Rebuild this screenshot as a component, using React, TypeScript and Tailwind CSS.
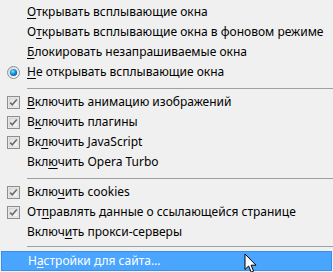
import type { ReactNode } from "react"

type Item = {
  pre: string
  key: string
  post: string
  mark?: "check" | "radio"
}

const groups: Item[][] = [
  [
    { pre: "", key: "О", post: "ткрывать всплывающие окна" },
    { pre: "О", key: "т", post: "крывать всплывающие окна в фоновом режиме" },
    { pre: "", key: "Б", post: "локировать незапрашиваемые окна" },
    { pre: "", key: "Н", post: "е открывать всплывающие окна", mark: "radio" },
  ],
  [
    { pre: "", key: "В", post: "ключить анимацию изображений", mark: "check" },
    { pre: "В", key: "к", post: "лючить плагины", mark: "check" },
    { pre: "Вк", key: "л", post: "ючить JavaScript", mark: "check" },
    { pre: "Вкл", key: "ю", post: "чить Opera Turbo" },
  ],
  [
    { pre: "Вклю", key: "ч", post: "ить cookies", mark: "check" },
    { pre: "От", key: "п", post: "равлять данные о ссылающейся странице", mark: "check" },
    { pre: "Включ", key: "и", post: "ть прокси-серверы" },
  ],
]

function CheckBox() {
  return (
    <svg width="13" height="13" viewBox="0 0 13 13">
      <defs>
        <linearGradient id="cbfill" x1="0" y1="0" x2="1" y2="1">
          <stop offset="0" stopColor="#dcdcdc" />
          <stop offset="1" stopColor="#fbfbfb" />
        </linearGradient>
      </defs>
      <rect x="0.5" y="0.5" width="12" height="12" fill="#f4f4f4" stroke="#8e8f8f" />
      <rect x="2" y="2" width="9" height="9" fill="url(#cbfill)" stroke="#c4c4c4" strokeWidth="0.6" />
      <path d="M3.2 6.6 L5.3 8.8 L9.8 3.6" fill="none" stroke="#6b6b6b" strokeWidth="1.6" />
    </svg>
  )
}

function Radio() {
  return (
    <svg width="13" height="13" viewBox="0 0 13 13">
      <defs>
        <radialGradient id="rdot" cx="0.4" cy="0.35" r="0.7">
          <stop offset="0" stopColor="#8fe2ff" />
          <stop offset="0.45" stopColor="#1d9ee6" />
          <stop offset="1" stopColor="#0c4f9c" />
        </radialGradient>
        <linearGradient id="rring" x1="0" y1="0" x2="1" y2="1">
          <stop offset="0" stopColor="#d8d8d8" />
          <stop offset="1" stopColor="#ffffff" />
        </linearGradient>
      </defs>
      <circle cx="6.5" cy="6.5" r="6" fill="url(#rring)" stroke="#8e8f8f" />
      <circle cx="6.5" cy="6.5" r="3.6" fill="url(#rdot)" />
    </svg>
  )
}

function Cursor() {
  return (
    <svg width="14" height="21" viewBox="0 0 14 21" className="absolute left-[242px] top-[1px]">
      <path
        d="M1 1 L1 16.5 L4.6 13 L7.2 19.2 L9.6 18.2 L7.1 12.2 L12 12.2 Z"
        fill="#ffffff"
        stroke="#000000"
        strokeWidth="1"
        strokeLinejoin="round"
      />
    </svg>
  )
}

function Row({ item }: { item: Item }) {
  let icon: ReactNode = null
  if (item.mark === "check") icon = <CheckBox />
  if (item.mark === "radio") icon = <Radio />
  return (
    <div className="flex h-[20px] items-center">
      <div className="flex w-[27px] items-center pl-[7px]">{icon}</div>
      <span className="whitespace-nowrap">
        {item.pre}
        <span className="underline underline-offset-2">{item.key}</span>
        {item.post}
      </span>
    </div>
  )
}

export default function App() {
  return (
    <div
      className="h-[272px] w-[333px] overflow-hidden bg-[#f0f0f0] pt-[2px] text-[12px] leading-none text-black"
      style={{ fontFamily: '"Noto Sans", "Liberation Sans", sans-serif' }}
    >
      {groups.map((g, gi) => (
        <div key={gi}>
          {g.map((it, i) => (
            <Row key={i} item={it} />
          ))}
          {/* separator */}
          {gi < groups.length - 1 ? (
            <div className="h-[10px] pl-[27px] pt-[6px]">
              <div className="h-px w-full bg-[#a0a0a0]" />
            </div>
          ) : (
            <div className="h-[9px] pl-[27px] pt-[4px]">
              <div className="h-px w-full bg-[#a0a0a0]" />
            </div>
          )}
        </div>
      ))}

      <div className="relative mx-px flex h-[20px] items-center border border-[#3a8ee6] bg-[#4aa5ff] pl-[26px] text-white">
        <span className="whitespace-nowrap">
          Н<span className="underline underline-offset-2">а</span>стройки для сайта...
        </span>
        <Cursor />
      </div>
    </div>
  )
}
